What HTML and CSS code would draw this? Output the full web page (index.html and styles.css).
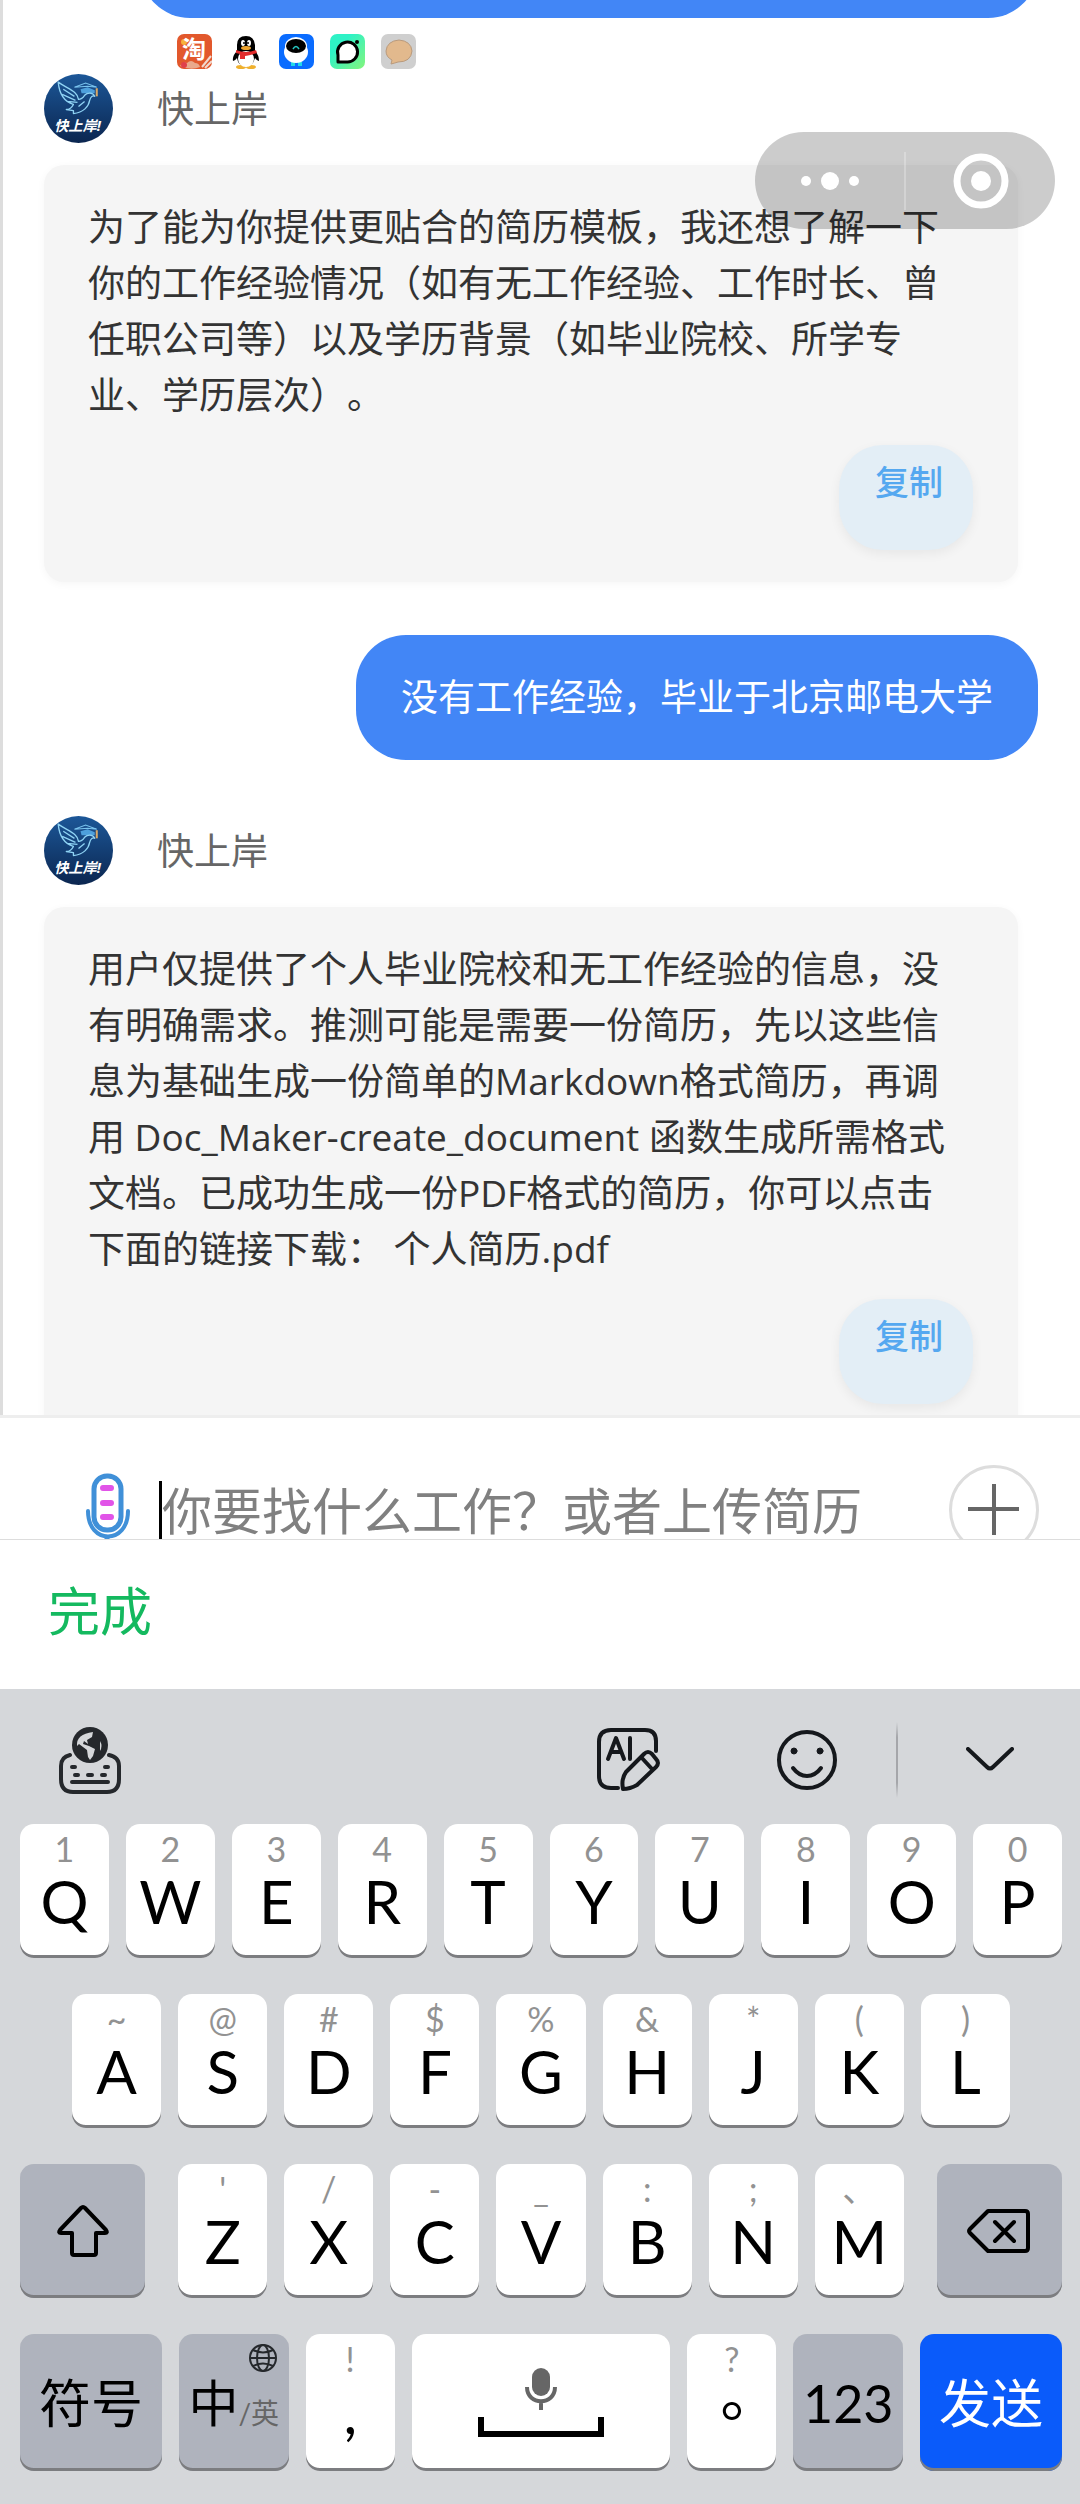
FILE: index.html
```html
<!DOCTYPE html>
<html lang="zh-CN">

<head>
    <meta charset="UTF-8">
    <meta name="viewport" content="width=device-width, initial-scale=1.0">
    <title>快上岸</title>
    <link rel="stylesheet" href="styles.css">
</head>

<body>
    <!-- shared avatar artwork -->
    <svg width="0" height="0" class="defs">
        <defs>
            <linearGradient id="avatarBg" x1="0" y1="0" x2="0" y2="1">
                <stop offset="0" stop-color="#1c5798" />
                <stop offset="1" stop-color="#0b2650" />
            </linearGradient>
            <symbol id="avatar" viewBox="0 0 68 68">
                <circle cx="34" cy="34" r="34" fill="url(#avatarBg)" />
                <path d="M36 15 L43 13 L50 16 L50 19 L37 19z" fill="#4ea0dc" />
                <path d="M30 13 L41 9 L52 13 L43 12z" fill="none" stroke="#79c3ee" stroke-width="1" />
                <path d="M52 14 v8" stroke="#d9a866" stroke-width="2" />
                <path d="M14 8 C15 19 19 27 29 30 C27 34 25 35 22 35 L29 36 L29 39 C39 38 44 32 45 26 C46 22 48 21 50 22 C48 18 43 18 40 21 C38 24 36 25 34 25 C33 17 24 15 14 8z M19 15 L30 22 M18 20 L31 26 M23 27 L33 28 M34 32 L40 27" fill="none" stroke="#8fd3f4" stroke-width="1.3" stroke-linejoin="round" />
                <text x="33" y="56" class="avatar-text">快上岸!</text>
            </symbol>
        </defs>
    </svg>

    <div class="status-icons">
        <svg viewBox="0 0 35 35">
            <rect width="35" height="35" rx="7" fill="#e2582c" />
            <circle cx="7" cy="8" r="3" fill="#f7b23c" />
            <text x="17" y="24" class="taobao-text">淘</text>
            <path d="M3 32 q3 -5 7 -3 q4 -4 8 0 q4 0 5 4 q-9 4 -20 -1z" fill="#e9a98c" />
            <circle cx="7" cy="31" r="3" fill="#e0404a" />
            <path d="M25 33 L34 22 M28 34 L35 27" stroke="#f1d9cf" stroke-width="2" />
        </svg>
        <svg viewBox="0 0 35 35">
            <ellipse cx="13" cy="33" rx="5" ry="2" fill="#efb02e" />
            <ellipse cx="23" cy="33" rx="5" ry="2" fill="#efb02e" />
            <path d="M9 17 Q4 22 5 27 Q7 27 9 24 Q10 32 18 32 Q25 32 27 24 Q29 27 31 27 Q31 21 27 17 V11 Q26 2 18 2 Q9 2 9 11z" fill="#000" />
            <ellipse cx="18" cy="25" rx="8" ry="8" fill="#fff" />
            <ellipse cx="15" cy="9" rx="2" ry="3" fill="#fff" />
            <ellipse cx="21" cy="9" rx="2" ry="3" fill="#fff" />
            <circle cx="16" cy="9" r="1" fill="#000" />
            <circle cx="20" cy="9" r="1" fill="#000" />
            <ellipse cx="18" cy="14" rx="5" ry="2" fill="#efa52e" />
            <path d="M8 16 Q18 20 28 16 L29 19 Q20 22 17 22 V25 H12 V20 L8 19z" fill="#e22c2c" />
        </svg>
        <svg viewBox="0 0 35 35">
            <rect width="35" height="35" rx="7" fill="#0a6cff" />
            <path d="M12 28 h4 v4 h-4z M19 28 h4 v4 h-4z" fill="#21d8e8" />
            <ellipse cx="17" cy="18" rx="12" ry="11" fill="#fff" />
            <ellipse cx="17" cy="12" rx="11" ry="9" fill="#fff" />
            <ellipse cx="17" cy="12" rx="10" ry="7" fill="#000" />
            <path d="M14 15 q3 -5 6 0" fill="none" stroke="#27c7c1" stroke-width="1.5" />
        </svg>
        <svg viewBox="0 0 35 35">
            <defs>
                <linearGradient id="mintBg" x1="0" y1="0" x2="1" y2="1">
                    <stop offset="0.3" stop-color="#2ef2c6" />
                    <stop offset="1" stop-color="#84f57c" />
                </linearGradient>
            </defs>
            <rect width="35" height="35" rx="7" fill="url(#mintBg)" />
            <path d="M8 28 L8 21 A10 10 0 1 1 17 28z" fill="#fff" stroke="#000" stroke-width="3" stroke-linejoin="round" />
            <circle cx="27" cy="8" r="2" fill="#000" />
        </svg>
        <svg viewBox="0 0 35 35">
            <rect width="35" height="35" rx="7" fill="#cfcfcf" />
            <path d="M10 30 L11 26 Q5 23 5 17 Q6 7 18 6 Q30 7 31 17 Q30 28 17 28 Q14 29 10 30z" fill="#e2b98d" stroke="#b99a7c" stroke-width="1" />
        </svg>
    </div>

    <div class="capsule">
        <button class="capsule-btn" aria-label="更多">
            <svg width="60" height="20" viewBox="0 0 60 20" fill="#fff">
                <circle cx="6" cy="10" r="5" />
                <circle cx="30" cy="10" r="9" />
                <circle cx="54" cy="10" r="5" />
            </svg>
        </button>
        <span class="capsule-line"></span>
        <button class="capsule-btn" aria-label="关闭">
            <svg width="56" height="56" viewBox="0 0 56 56">
                <circle cx="28" cy="28" r="24" fill="none" stroke="#fff" stroke-width="7" />
                <circle cx="28" cy="28" r="10" fill="#fff" />
            </svg>
        </button>
    </div>

    <main class="chat">
        <div class="bubble bubble-cut"></div>

        <div class="sender">
            <svg class="avatar"><use href="#avatar" /></svg>
            <span class="sender-name">快上岸</span>
        </div>
        <div class="card">
            <p>为了能为你提供更贴合的简历模板，我还想了解一下你的工作经验情况（如有无工作经验、工作时长、曾任职公司等）以及学历背景（如毕业院校、所学专业、学历层次）。</p>
            <button class="copy-btn">复制</button>
        </div>

        <div class="bubble">没有工作经验，毕业于北京邮电大学</div>

        <div class="sender">
            <svg class="avatar"><use href="#avatar" /></svg>
            <span class="sender-name">快上岸</span>
        </div>
        <div class="card">
            <p>用户仅提供了个人毕业院校和无工作经验的信息，没有明确需求。推测可能是需要一份简历，先以这些信息为基础生成一份简单的Markdown格式简历，再调用 Doc_Maker-create_document 函数生成所需格式文档。已成功生成一份PDF格式的简历，你可以点击下面的链接下载： 个人简历.pdf</p>
            <button class="copy-btn">复制</button>
        </div>
    </main>

    <div class="input-bar">
        <button class="voice-btn" aria-label="语音输入">
            <svg width="46" height="74" viewBox="0 0 46 74" fill="none" stroke="#4090d8" stroke-linecap="round">
                <rect x="9" y="3" width="27" height="54" rx="13" stroke-width="5" />
                <path d="M3 38 C3 72 43 72 43 38" stroke-width="4" />
                <path d="M22 65 V73" stroke-width="5" />
                <path d="M18 15 H26 M18 30 H26 M18 44 H26" stroke="#e154e8" stroke-width="6" />
            </svg>
        </button>
        <input type="text" class="message-input" placeholder="你要找什么工作？或者上传简历" aria-label="消息">
        <button class="plus-btn" aria-label="添加">
            <svg width="52" height="52" viewBox="0 0 52 52" stroke="#666" stroke-width="4">
                <path d="M0 25 H51 M26 0 V51" />
            </svg>
        </button>
    </div>

    <div class="done-bar">
        <button class="done-btn">完成</button>
    </div>

    <div class="keyboard">
        <div class="kb-tools">
            <button class="tool" aria-label="切换键盘">
                <svg width="62" height="68" viewBox="0 0 62 68" fill="none" stroke="#25282c" stroke-width="4" stroke-linecap="round">
                    <path d="M11 29 Q2 31 2 40 V53 Q2 66 14 66 H48 Q60 66 60 53 V40 Q60 31 50 29" />
                    <path d="M13 41 H16 M46 41 H49 M16 49 H19 M29 49 H33 M43 49 H46 M13 56 H49" />
                    <circle cx="31" cy="19" r="18" fill="#25282c" stroke="none" />
                    <path d="M18 20 Q17 8 34 6 L33 11 L28 14 L29 18 L25 15 L24 18 L30 20 L36 23 L34 30 L31 34 L29 31 L28 24 L20 18z M41 15 q3 5 0 10z" fill="#d5d7da" stroke="none" />
                </svg>
            </button>
            <span class="spacer"></span>
            <button class="tool" aria-label="AI写作">
                <svg width="64" height="64" viewBox="0 0 64 64" fill="none" stroke="#15181c" stroke-width="4" stroke-linecap="round" stroke-linejoin="round">
                    <path d="M59 23 V13 Q59 2 48 2 H14 Q2 2 2 14 V48 Q2 60 14 60 H21" />
                    <path d="M11 31 L19 10 L27 31 M14 24 H24 M33 10 V31" />
                    <path d="M26 61 Q24 51 29 44 L47 26 Q51 22 55 26 L59 31 Q63 35 59 39 L40 57 Q33 61 26 61z M44 29 L55 41" />
                </svg>
            </button>
            <button class="tool" aria-label="表情">
                <svg width="62" height="62" viewBox="0 0 62 62" fill="none" stroke="#15181c" stroke-width="4" stroke-linecap="round">
                    <circle cx="31" cy="31" r="28" />
                    <path d="M17 39 Q23 47 31 47 Q39 47 45 39" />
                    <circle cx="18" cy="22" r="3" fill="#15181c" stroke-width="1" />
                    <circle cx="44" cy="22" r="3" fill="#15181c" stroke-width="1" />
                </svg>
            </button>
            <span class="tool-line"></span>
            <button class="tool" aria-label="收起键盘">
                <svg width="48" height="26" viewBox="0 0 48 26" fill="none" stroke="#15181c" stroke-width="4" stroke-linecap="round" stroke-linejoin="round">
                    <path d="M2 2 L21 20 Q24 23 27 20 L46 2" />
                </svg>
            </button>
        </div>

        <div class="kb-row">
            <button class="key"><span>1</span>Q</button>
            <button class="key"><span>2</span>W</button>
            <button class="key"><span>3</span>E</button>
            <button class="key"><span>4</span>R</button>
            <button class="key"><span>5</span>T</button>
            <button class="key"><span>6</span>Y</button>
            <button class="key"><span>7</span>U</button>
            <button class="key"><span>8</span>I</button>
            <button class="key"><span>9</span>O</button>
            <button class="key"><span>0</span>P</button>
        </div>

        <div class="kb-row kb-row-middle">
            <button class="key"><span>~</span>A</button>
            <button class="key"><span>@</span>S</button>
            <button class="key"><span>#</span>D</button>
            <button class="key"><span>$</span>F</button>
            <button class="key"><span>%</span>G</button>
            <button class="key"><span>&amp;</span>H</button>
            <button class="key"><span>*</span>J</button>
            <button class="key"><span>(</span>K</button>
            <button class="key"><span>)</span>L</button>
        </div>

        <div class="kb-row">
            <button class="key key-dark key-shift" aria-label="大写">
                <svg width="52" height="52" viewBox="0 0 52 52" fill="none" stroke="#000" stroke-width="4" stroke-linejoin="round">
                    <path d="M24 3 Q26 1 28 3 L49 25 Q51 28 48 28 H39 V48 Q39 50 37 50 H17 Q15 50 15 48 V28 H4 Q1 28 3 25z" />
                </svg>
            </button>
            <button class="key"><span>'</span>Z</button>
            <button class="key"><span>/</span>X</button>
            <button class="key"><span>-</span>C</button>
            <button class="key"><span>_</span>V</button>
            <button class="key"><span>:</span>B</button>
            <button class="key"><span>;</span>N</button>
            <button class="key"><span>、</span>M</button>
            <button class="key key-dark key-delete" aria-label="删除">
                <svg width="64" height="44" viewBox="0 0 64 44" fill="none" stroke="#000" stroke-width="4" stroke-linejoin="round" stroke-linecap="round">
                    <path d="M21 2 H58 Q61 2 61 5 V39 Q61 42 58 42 H21 L3 24 Q1 22 3 20z M28 13 L47 32 M47 13 L28 32" />
                </svg>
            </button>
        </div>

        <div class="kb-row kb-row-bottom">
            <button class="key key-dark key-wide key-text">符号</button>
            <button class="key key-dark key-mid key-lang">
                <svg class="globe" width="28" height="28" viewBox="0 0 28 28" fill="none" stroke="#25282c" stroke-width="2">
                    <circle cx="14" cy="14" r="13" />
                    <ellipse cx="14" cy="14" rx="6" ry="13" />
                    <path d="M1 14 H27 M4 6 Q14 11 24 6 M4 22 Q14 17 24 22" />
                </svg>
                中<small>/英</small>
            </button>
            <button class="key"><span>!</span>,</button>
            <button class="key key-space" aria-label="空格">
                <svg width="126" height="70" viewBox="0 0 126 70" fill="none">
                    <rect x="54" y="0" width="18" height="28" rx="9" fill="#666" />
                    <path d="M49 19 C49 38 77 38 77 19 M63 34 V42" stroke="#666" stroke-width="4" />
                    <path d="M3 49 V66 H123 V49" stroke="#000" stroke-width="6" />
                </svg>
            </button>
            <button class="key key-stop"><span>?</span>。</button>
            <button class="key key-dark key-mid key-text">123</button>
            <button class="key key-wide key-text key-send">发送</button>
        </div>
    </div>
</body>

</html>
```
FILE: styles.css
```css
* {
    box-sizing: border-box;
}

body {
    font-family: "Open Sans", "Noto Sans CJK SC", sans-serif;
    margin: 0;
    height: 100vh;
    display: flex;
    flex-direction: column;
    background-color: #ffffff;
    position: relative;
    overflow: hidden;
}

button {
    border: none;
    background: none;
    padding: 0;
    font-family: inherit;
    cursor: pointer;
}

svg {
    display: block;
}

.defs {
    position: absolute;
}

.status-icons {
    position: absolute;
    top: 34px;
    left: 177px;
    display: flex;
    gap: 16px;
}

.status-icons svg {
    width: 35px;
    height: 35px;
}

.taobao-text {
    font-size: 24px;
    font-weight: bold;
    fill: #ffffff;
    text-anchor: middle;
}

.capsule {
    position: absolute;
    top: 132px;
    right: 25px;
    width: 300px;
    height: 97px;
    display: flex;
    align-items: center;
    border-radius: 49px;
    background-color: rgba(0, 0, 0, 0.2);
    z-index: 10;
}

.capsule-btn {
    flex: 1;
    display: flex;
    justify-content: center;
}

.capsule-line {
    width: 2px;
    height: 58px;
    background-color: rgba(255, 255, 255, 0.25);
}

/* chat */
.chat {
    flex: 1;
    min-height: 0;
    overflow: hidden;
    display: flex;
    flex-direction: column;
    border-left: 3px solid #dddddd;
    padding: 0 42px 0 41px;
}

.bubble {
    flex-shrink: 0;
    align-self: flex-end;
    background-color: #4286f6;
    color: #ffffff;
    font-size: 37px;
    line-height: 56px;
    padding: 34px 45px 35px;
    border-radius: 50px;
    margin: 53px 0 56px;
}

/* older message, scrolled mostly out of view */
.bubble-cut {
    align-self: stretch;
    height: 125px;
    margin: -107px 0 56px 96px;
}

.sender {
    flex-shrink: 0;
    display: flex;
    align-items: center;
    gap: 44px;
    margin-bottom: 22px;
}

.avatar {
    width: 69px;
    height: 69px;
}

.avatar-text {
    font-size: 14px;
    font-weight: bold;
    font-style: italic;
    fill: #ffffff;
    text-anchor: middle;
}

.sender-name {
    font-size: 37px;
    line-height: 56px;
    color: #666666;
}

.card {
    flex-shrink: 0;
    display: flex;
    flex-direction: column;
    background-color: #f5f5f5;
    border-radius: 20px;
    box-shadow: 0 2px 8px rgba(0, 0, 0, 0.04);
    padding: 34px 45px 32px 44px;
    margin-right: 20px;
}

.card p {
    margin: 0;
    padding-right: 8px;
    font-size: 37px;
    line-height: 56px;
    color: #333333;
    text-spacing-trim: space-all;
}

.copy-btn {
    align-self: flex-end;
    width: 134px;
    height: 105px;
    margin-top: 22px;
    padding: 0 0 34px 6px;
    border-radius: 44px;
    background-color: #e3eef6;
    box-shadow: 0 4px 12px rgba(0, 0, 0, 0.06);
    color: #55a8f0;
    font-size: 34px;
    font-weight: 500;
}

/* input */
.input-bar {
    flex-shrink: 0;
    display: flex;
    align-items: flex-start;
    height: 125px;
    overflow: hidden;
    border-top: 3px solid #eeeeee;
    border-bottom: 1px solid #dddddd;
    padding: 47px 41px 0 85px;
}

.voice-btn {
    margin-top: 8px;
}

.message-input {
    flex: 1;
    min-width: 0;
    height: 58px;
    margin: 16px 28px 0;
    padding: 0 0 4px;
    border: none;
    border-left: 3px solid #000000;
    outline: none;
    font-family: "Noto Sans CJK SC", sans-serif;
    font-size: 50px;
    background: none;
}

.message-input::placeholder {
    color: #808080;
    opacity: 1;
}

.plus-btn {
    display: flex;
    align-items: center;
    justify-content: center;
    width: 90px;
    height: 90px;
    border: 3px solid #dddddd;
    border-radius: 50%;
}

.done-bar {
    flex-shrink: 0;
    display: flex;
    align-items: center;
    height: 149px;
    padding: 0 48px 8px;
}

.done-btn {
    font-size: 52px;
    line-height: 64px;
    color: #14b95f;
}

/* keyboard */
.keyboard {
    flex-shrink: 0;
    display: flex;
    flex-direction: column;
    gap: 36px;
    background-color: #d5d7da;
    padding: 0 18px 33px 20px;
    font-family: Lato, "Noto Sans CJK SC", sans-serif;
}

.kb-tools {
    display: flex;
    align-items: center;
    height: 99px;
    padding: 42px 48px 0 39px;
}

.spacer {
    flex: 1;
}

.tool + .tool {
    margin-left: 115px;
}

.tool-line {
    width: 2px;
    height: 76px;
    margin: 0 68px 0 58px;
    background: linear-gradient(rgba(160, 160, 165, 0), #a5a6aa 20%, #a5a6aa 80%, rgba(160, 160, 165, 0));
}

.kb-row {
    display: flex;
    gap: 17px;
}

.kb-row-middle {
    padding: 0 52px;
}

.key {
    flex: 89 1 0;
    min-width: 0;
    height: 134px;
    display: flex;
    flex-direction: column;
    align-items: center;
    padding-top: 5px;
    border-radius: 14px;
    background-color: #ffffff;
    box-shadow: inset 0 -3px 0 #7c7d80;
    color: #000000;
    font-size: 60px;
    line-height: 64px;
}

.key span {
    font-size: 34px;
    line-height: 40px;
    color: #929292;
}

.key-dark {
    background-color: #afb3bd;
}

.key-shift,
.key-delete {
    flex-grow: 125;
    justify-content: center;
    padding-top: 0;
}

.key-shift {
    margin-right: 16px;
}

.key-delete {
    margin-left: 16px;
}

.kb-row-bottom .key {
    height: 137px;
}

.key-wide {
    flex-grow: 142;
}

.key-mid {
    flex-grow: 110;
}

.key-text {
    justify-content: center;
    padding-top: 0;
    font-size: 52px;
    white-space: nowrap;
}

.key-send {
    background-color: #0a5bfa;
    color: #ffffff;
}

.key-lang {
    position: relative;
    flex-direction: row;
    justify-content: center;
    align-items: center;
    padding-top: 0;
    font-size: 50px;
}

.key-lang small {
    font-size: 28px;
    line-height: 32px;
    margin-top: 20px;
    color: #666666;
}

.globe {
    position: absolute;
    top: 10px;
    right: 12px;
}

/* the TC face centres the full stop */
.key-stop {
    font-family: Lato, "Noto Sans CJK TC", sans-serif;
}

.key-space {
    flex-grow: 259;
    justify-content: center;
    padding-top: 0;
}
```
